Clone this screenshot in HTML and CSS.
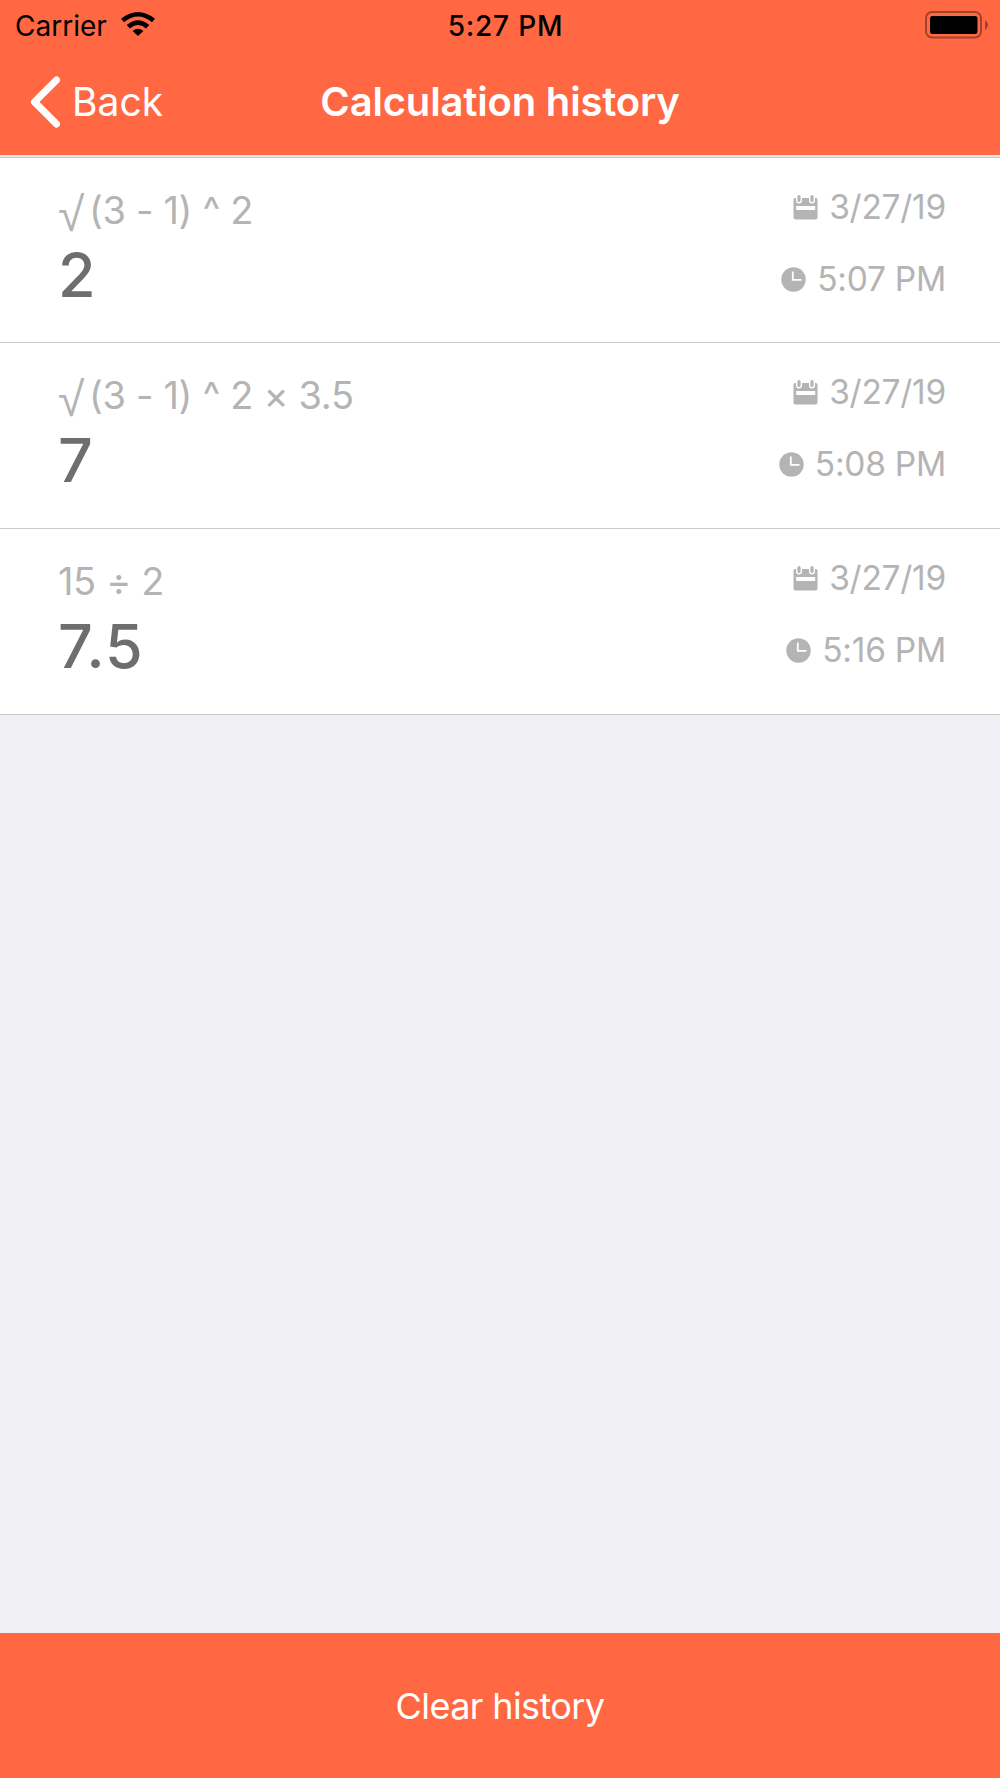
FILE: index.html
```html
<!DOCTYPE html>
<html lang="en">

<head>
    <meta charset="UTF-8">
    <title>Calculation history</title>
    <link rel="stylesheet" href="styles.css">
</head>

<body>
    <header class="header">
        <div class="status-bar">
            <div class="status-left">
                <span class="carrier">Carrier</span>
                <svg class="wifi" width="34" height="24" viewBox="0 0 34 24">
                    <path d="M0 6.8 Q17 -6.8 34 6.8 L31 10.2 Q17 -1 3 10.2 Z" />
                    <path d="M5.7 13 Q17 3.4 28.3 13 L25 16.4 Q17 9.6 9 16.4 Z" />
                    <path d="M11.6 19 Q17 14.6 22.4 19 L17 24 Z" />
                </svg>
            </div>
            <span class="clock">5:27 PM</span>
            <div class="status-right">
                <svg width="63" height="28" viewBox="0 0 63 28">
                    <rect x="1" y="1" width="55" height="25.5" rx="6" fill="none" stroke="#a4422a" stroke-width="2" />
                    <rect x="5" y="5" width="47.5" height="18" rx="2.5" />
                    <path d="M60 9 Q63 11.5 63 14 Q63 16.5 60 19 Z" fill="#a4422a" />
                </svg>
            </div>
        </div>
        <nav class="nav-bar">
            <a href="#" class="back">
                <svg width="30" height="52" viewBox="0 0 30 52">
                    <path d="M26.5 4 L4.5 26 L26.5 48" />
                </svg>
                <span>Back</span>
            </a>
            <h1 class="title">Calculation history</h1>
        </nav>
    </header>

    <main id="history" class="history"></main>

    <button class="clear" type="button">Clear history</button>

    <script>
        const history_list = [
            { root: true, expression: '(3 - 1) ^ 2', result: '2', date: '3/27/19', time: '5:07 PM' },
            { root: true, expression: '(3 - 1) ^ 2 × 3.5', result: '7', date: '3/27/19', time: '5:08 PM' },
            { root: false, expression: '15 ÷ 2', result: '7.5', date: '3/27/19', time: '5:16 PM' }
        ];

        const calendarIcon = `
            <svg class="icon" width="25" height="25" viewBox="0 0 25 25">
                <path d="M2 3 H23 Q24.5 3 24.5 4.5 V22.5 Q24.5 24.5 22.5 24.5 H2.5 Q.5 24.5 .5 22.5 V4.5 Q.5 3 2 3 Z" fill="#b4b4b4" />
                <path d="M6 1.5 V5.5 M19 1.5 V5.5" stroke="#fff" stroke-width="6" stroke-linecap="round" />
                <path d="M6 1.7 V5.5 M19 1.7 V5.5" stroke="#b4b4b4" stroke-width="3.2" stroke-linecap="round" />
                <rect x="3.2" y="11" width="19" height="4" fill="#fff" />
            </svg>`;

        const clockIcon = `
            <svg class="icon" width="25" height="25" viewBox="0 0 25 25">
                <circle cx="12.5" cy="12.5" r="12.2" fill="#b4b4b4" />
                <path d="M11.8 4.5 V12.8 H20.5" fill="none" stroke="#fff" stroke-width="1.8" />
            </svg>`;

        document.getElementById('history').innerHTML = history_list.map((item) => `
            <section class="row">
                <div class="calculation">
                    <div class="expression">${item.root ? '<span class="root">√</span>' : ''}${item.expression}</div>
                    <div class="result">${item.result}</div>
                </div>
                <div class="when">
                    <div class="date">${calendarIcon}<span>${item.date}</span></div>
                    <div class="time">${clockIcon}<span>${item.time}</span></div>
                </div>
            </section>
        `).join('');
    </script>
</body>

</html>
```
FILE: styles.css
```css
* {
    box-sizing: border-box;
}

body {
    display: flex;
    flex-direction: column;
    height: 1778px;
    margin: 0;
    background-color: #efeff4;
    font-family: Inter, "Liberation Sans", sans-serif;
}

.header {
    height: 155px;
    background-color: #ff6843;
}

/* Status bar */
.status-bar {
    display: grid;
    grid-template-columns: 1fr auto 1fr;
    align-items: center;
    height: 50px;
    padding: 0 12px 0 15px;
    font-size: 28px;
    color: #000;
}

.status-left {
    display: flex;
    align-items: center;
    gap: 14px;
}

.carrier {
    margin-top: 1px;
}

.wifi {
    margin-bottom: 2px;
}

.status-right {
    display: flex;
    justify-content: flex-end;
}

.clock {
    margin: 1px 0 0 8px;
    font-weight: 500;
    letter-spacing: 0.8px;
}

/* Navigation */
.nav-bar {
    display: grid;
    grid-template-columns: 1fr auto 1fr;
    align-items: center;
    height: 103px;
    padding: 0 30px;
    color: #fff;
}

.back {
    display: flex;
    align-items: center;
    gap: 12px;
    color: #fff;
    font-size: 39px;
    text-decoration: none;
}

.back path {
    fill: none;
    stroke: #fff;
    stroke-width: 7;
    stroke-linecap: round;
    stroke-linejoin: round;
}

.title {
    margin: 0;
    font-size: 40px;
    font-weight: 600;
    letter-spacing: -0.18px;
    white-space: nowrap;
}

/* List of calculations */
.history {
    flex: 1;
    border-top: 2px solid #e6e6eb;
}

.row {
    display: flex;
    justify-content: space-between;
    height: 186px;
    padding: 30px 54px 0 58px;
    background-color: #fff;
    border-bottom: 1px solid #c8c7cc;
}

.row:first-child {
    border-top: 1px solid #c8c7cc;
}

.expression {
    font-size: 38px;
    line-height: 44px;
    letter-spacing: -0.35px;
    font-feature-settings: "calt" 0;
    color: #b4b4b4;
}

.root {
    display: inline-block;
    width: 31px;
    font-family: "Liberation Sans", sans-serif;
    font-size: 48px;
    line-height: 0;
    vertical-align: -7px;
}

.result {
    font-size: 61px;
    font-weight: 500;
    line-height: 87px;
    letter-spacing: 1px;
    color: #6d6f6e;
}

.when {
    font-size: 33.5px;
    line-height: 38px;
    letter-spacing: -0.25px;
    color: #b4b4b4;
}

.date,
.time {
    display: flex;
    align-items: center;
    justify-content: flex-end;
    gap: 11px;
}

.time {
    margin-top: 34px;
}

.clear {
    height: 145px;
    padding: 0;
    border: none;
    background-color: #ff6843;
    color: #fff;
    font-family: inherit;
    font-size: 36px;
    letter-spacing: -0.6px;
}
```
